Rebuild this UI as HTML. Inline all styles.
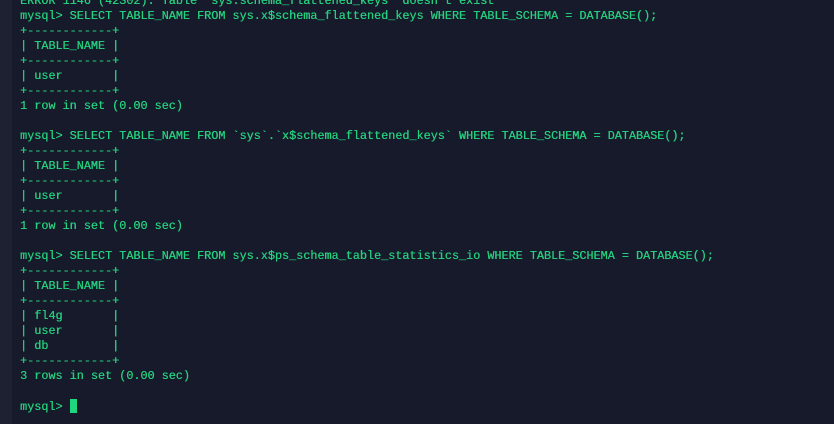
<!DOCTYPE html>
<html><head><meta charset="utf-8"><style>
html,body{margin:0;padding:0;width:834px;height:424px;overflow:hidden;background:#161a2b;}
.strip{position:absolute;left:0;top:0;width:12px;height:424px;background:#1e2131;}
pre{position:absolute;left:20px;top:-6px;margin:0;font-family:"Liberation Mono",monospace;font-size:11.8px;line-height:15px;color:#25cf7d;text-shadow:0.3px 0 0 #25cf7d;}
.cur{display:inline-block;width:7px;height:14px;background:#1fd67e;vertical-align:-3px;}
</style></head><body><div class="strip"></div><pre>ERROR 1146 (42S02): Table 'sys.schema_flattened_keys' doesn't exist
mysql&gt; SELECT TABLE_NAME FROM sys.x$schema_flattened_keys WHERE TABLE_SCHEMA = DATABASE();
+------------+
| TABLE_NAME |
+------------+
| user       |
+------------+
1 row in set (0.00 sec)

mysql&gt; SELECT TABLE_NAME FROM `sys`.`x$schema_flattened_keys` WHERE TABLE_SCHEMA = DATABASE();
+------------+
| TABLE_NAME |
+------------+
| user       |
+------------+
1 row in set (0.00 sec)

mysql&gt; SELECT TABLE_NAME FROM sys.x$ps_schema_table_statistics_io WHERE TABLE_SCHEMA = DATABASE();
+------------+
| TABLE_NAME |
+------------+
| fl4g       |
| user       |
| db         |
+------------+
3 rows in set (0.00 sec)

mysql&gt; <span class="cur"></span></pre></body></html>
